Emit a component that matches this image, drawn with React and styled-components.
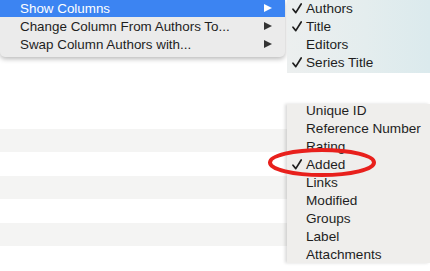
import React from "react";
import styled, { createGlobalStyle } from "styled-components";

const Global = createGlobalStyle`
  html, body { margin: 0; padding: 0; background: #fff; }
  body { font-family: "Liberation Sans", Arial, sans-serif; }
`;

const Page = styled.div`
  position: relative;
  width: 430px;
  height: 271px;
  overflow: hidden;
  background: #fff;
`;

const Table = styled.div`
  display: flex;
  flex-direction: column;
  padding-top: 129px;
`;

const TableRow = styled.div`
  height: ${(p) => p.$h}px;
  background: ${(p) => (p.$striped ? "#f4f4f3" : "#ffffff")};
`;

const MainMenu = styled.div`
  position: absolute;
  left: 0;
  top: 0;
  width: 285px;
  height: 57px;
  background: #ebebeb;
  border-radius: 0 0 5px 5px;
  box-shadow: 0 2px 5px rgba(0, 0, 0, 0.28);
  overflow: hidden;
`;

const MenuList = styled.div`
  display: flex;
  flex-direction: column;
  margin-top: ${(p) => p.$offset || 0}px;
`;

const MainItem = styled.div`
  display: flex;
  align-items: center;
  height: 18px;
  padding: 0 12px 0 20px;
  font-size: 13.4px;
  color: ${(p) => (p.$active ? "#fff" : "#1e1e1e")};
  background: ${(p) => (p.$active ? "#3c84f2" : "transparent")};
  white-space: nowrap;
`;

const Label = styled.span`
  flex: 1;
`;

const Arrow = styled.span`
  width: 0;
  height: 0;
  border-top: 4.5px solid transparent;
  border-bottom: 4.5px solid transparent;
  border-left: 8px solid ${(p) => (p.$active ? "#fff" : "#333")};
  margin-right: 1px;
`;

const SubMenu = styled.div`
  position: absolute;
  left: 287px;
  top: ${(p) => p.$top}px;
  width: 143px;
  height: ${(p) => p.$height}px;
  background: ${(p) =>
    p.$tint
      ? "linear-gradient(90deg, #ecefef 0%, #e4edee 55%, #dbeaed 100%)"
      : "#efeeec"};
  box-shadow: ${(p) => (p.$tint ? "none" : "-2px 0 3px rgba(0, 0, 0, 0.15)")};
  overflow: hidden;
`;

const SubItem = styled.div`
  display: flex;
  align-items: center;
  height: 18px;
  font-size: 13.6px;
  color: #1e1e1e;
  white-space: nowrap;
`;

const CheckBox = styled.span`
  display: flex;
  align-items: center;
  width: 19px;
  padding-left: 5px;
  box-sizing: border-box;
`;

const CheckMark = () => (
  <svg width="10" height="11" viewBox="0 0 10 11">
    <path
      d="M1 6.2 L3.8 9.6 L9.2 1"
      fill="none"
      stroke="#1e1e1e"
      strokeWidth="1.7"
      strokeLinecap="round"
      strokeLinejoin="round"
    />
  </svg>
);

const Circle = styled.svg`
  position: absolute;
  left: 265px;
  top: 147px;
  overflow: visible;
`;

const stripes = [
  [23, true],
  [24, false],
  [23, true],
  [24, false],
  [23, true],
  [25, false],
];

const upper = [
  ["Authors", true],
  ["Title", true],
  ["Editors", false],
  ["Series Title", true],
];

const lower = [
  ["Unique ID", false],
  ["Reference Number", false],
  ["Rating", false],
  ["Added", true],
  ["Links", false],
  ["Modified", false],
  ["Groups", false],
  ["Label", false],
  ["Attachments", false],
];

const mainItems = [
  ["Show Columns", true],
  ["Change Column From Authors To...", false],
  ["Swap Column Authors with...", false],
];

export default function App() {
  return (
    <>
      <Global />
      <Page>
        <Table>
          {stripes.map(([h, s], i) => (
            <TableRow key={i} $h={h} $striped={s} />
          ))}
        </Table>

        <MainMenu>
          <MenuList $offset={-1}>
            {mainItems.map(([t, a]) => (
              <MainItem key={t} $active={a}>
                <Label>{t}</Label>
                <Arrow $active={a} />
              </MainItem>
            ))}
          </MenuList>
        </MainMenu>

        <SubMenu $top={0} $height={73} $tint>
          <MenuList $offset={-1}>
            {upper.map(([t, c]) => (
              <SubItem key={t}>
                <CheckBox>{c && <CheckMark />}</CheckBox>
                {t}
              </SubItem>
            ))}
          </MenuList>
        </SubMenu>

        <SubMenu $top={104} $height={159}>
          <MenuList $offset={-3}>
            {lower.map(([t, c]) => (
              <SubItem key={t}>
                <CheckBox>{c && <CheckMark />}</CheckBox>
                {t}
              </SubItem>
            ))}
          </MenuList>
        </SubMenu>

        <Circle width="114" height="31" viewBox="0 0 114 31">
          <ellipse
            cx="57"
            cy="15.5"
            rx="52"
            ry="12.5"
            fill="none"
            stroke="#e8201c"
            strokeWidth="4"
          />
        </Circle>
      </Page>
    </>
  );
}
